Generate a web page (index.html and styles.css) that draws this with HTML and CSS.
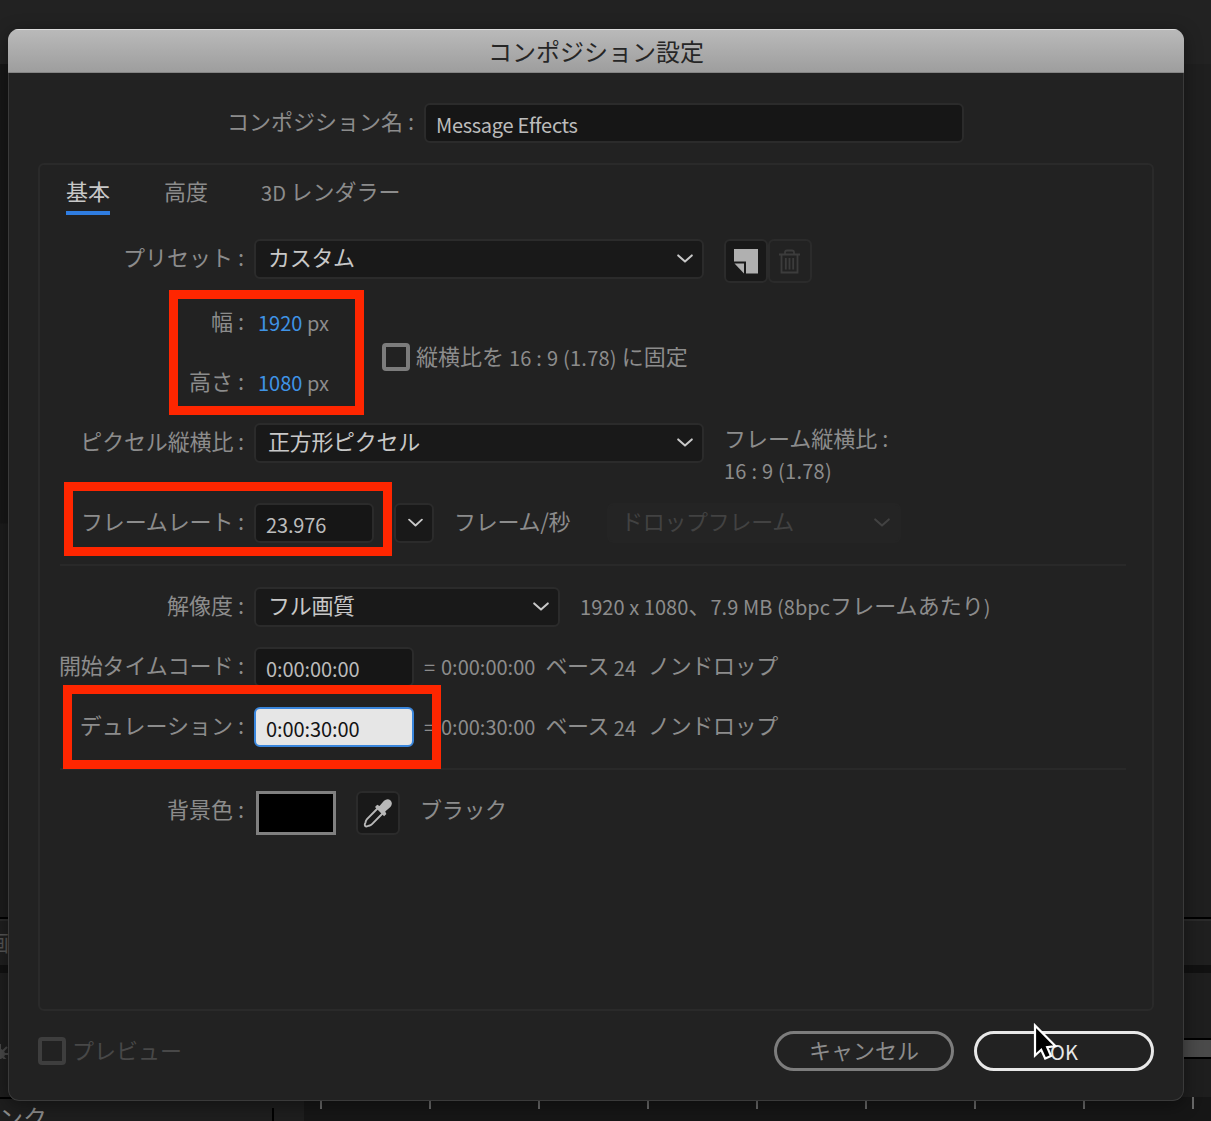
FILE: index.html
```html
<!DOCTYPE html>
<html lang="ja">
<head>
<meta charset="utf-8">
<title>コンポジション設定</title>
<link rel="stylesheet" href="styles.css">
</head>
<body>
<svg class="defs" width="0" height="0" aria-hidden="true">
  <symbol id="chevron" viewBox="0 0 16 10"><path d="M1.2 1.4 8 7.600 14.800 1.400" fill="none" stroke="currentColor" stroke-width="2" stroke-linecap="round" stroke-linejoin="round"/></symbol>
</svg>
<div class="screen">
  <div class="app">
    <div class="app-top"></div>
    <div class="app-view"><div class="app-left"></div><div class="app-right"></div></div>
    <div class="app-bar"><span class="app-bar-text">画</span></div>
    <div class="app-gap"></div>
    <div class="app-tools">
      <svg class="gear" width="20" height="20" viewBox="0 0 20 20"><path d="M10 0v20M0 10h20M3 3l14 14M17 3 3 17" stroke="#484848" stroke-width="2"/><circle cx="10" cy="10" r="5" fill="#484848"/></svg>
      <div class="app-range"></div>
    </div>
    <div class="app-timeline">
      <div class="layers"><span class="layers-text">ンク</span><span class="layers-mark"></span></div>
      <div class="ruler"><i></i><i></i><i></i><i></i><i></i><i></i><i></i><i></i><i></i></div>
    </div>
  </div>

  <div class="dialog">
    <div class="titlebar">コンポジション設定</div>
    <div class="row name-row">
      <div class="label">コンポジション名 :</div>
      <div class="input name-input">Message Effects</div>
    </div>

    <div class="panel">
      <div class="tabs">
        <div class="tab active">基本</div>
        <div class="tab">高度</div>
        <div class="tab render"><span class="lat">3D </span>レンダラー</div>
      </div>

      <div class="row preset">
        <div class="label">プリセット :</div>
        <div class="select wide">カスタム<svg class="chev"><use href="#chevron"/></svg></div>
        <div class="tools">
          <div class="tool"><svg width="25" height="25" viewBox="0 0 25 25"><path d="M0 0h24v24.500H12V12.500H0z" fill="#b0b0b0"/><path d="M.5 14.500H10V24.500z" fill="#b0b0b0"/></svg></div>
          <div class="tool off"><svg width="22" height="25" viewBox="0 0 22 25"><path d="M0 5.500h21M6 5V3.500Q6 1.500 8 1.500h5Q15 1.500 15 3.500V5M2.500 6v17.500h16V6M6.800 9v11.500M10.500 9v11.500M14.200 9v11.500" fill="none" stroke="#3c3c3c" stroke-width="1.800"/></svg></div>
        </div>
      </div>

      <div class="dims">
        <div class="dims-rows">
          <div class="row"><div class="label">幅 :</div><div class="value"><span class="lat"><b>1920</b> px</span></div></div>
          <div class="row"><div class="label">高さ :</div><div class="value"><span class="lat"><b>1080</b> px</span></div></div>
        </div>
        <div class="lock"><span class="check"></span><span class="lock-text">縦横比を <span class="lat ratio">16 : 9 (1.78)</span> に固定</span></div>
      </div>

      <div class="row aspect">
        <div class="label tight">ピクセル縦横比 :</div>
        <div class="select wide">正方形ピクセル<svg class="chev"><use href="#chevron"/></svg></div>
        <div class="frame-aspect">フレーム縦横比 :<br><span class="lat ratio">16 : 9 (1.78)</span></div>
      </div>

      <div class="row">
        <div class="label tight">フレームレート :</div>
        <div class="input rate">23.976</div>
        <div class="select drop"><svg class="chev"><use href="#chevron"/></svg></div>
        <div class="unit">フレーム/秒</div>
        <div class="select disabled">ドロップフレーム<svg class="chev"><use href="#chevron"/></svg></div>
      </div>

      <div class="divider"></div>

      <div class="row">
        <div class="label">解像度 :</div>
        <div class="select res">フル画質<svg class="chev"><use href="#chevron"/></svg></div>
        <div class="res-info"><span class="lat">1920 x 1080</span>、<span class="lat">7.9 MB (8bpc</span>フレームあたり<span class="lat">)</span></div>
      </div>
      <div class="row">
        <div class="label tight">開始タイムコード :</div>
        <div class="input time">0:00:00:00</div>
        <div class="note"><span class="lat equals">=</span><span class="lat">0:00:00:00</span><span class="base">ベース <span class="lat">24</span></span>ノンドロップ</div>
      </div>
      <div class="row">
        <div class="label">デュレーション :</div>
        <div class="input time focus">0:00:30:00</div>
        <div class="note"><span class="lat equals">=</span><span class="lat">0:00:30:00</span><span class="base">ベース <span class="lat">24</span></span>ノンドロップ</div>
      </div>

      <div class="divider"></div>

      <div class="row">
        <div class="label">背景色 :</div>
        <div class="swatch"></div>
        <div class="tool dropper"><svg width="30" height="30" viewBox="0 0 30 30"><path d="M14.500 10.500 4 21.200Q2.800 22.500 2.500 24.500L1.800 26.200Q1.500 28.700 4 28.400L6 27.700Q7.800 27.400 9 26.200L19.500 15.500" fill="none" stroke="#b8b8b8" stroke-width="1.900"/><path d="M12 9 14.200 6.700 16.500 8 21 2.800Q24.500-.3 27.600 2.500 30.200 5.500 27.400 9L22.200 13.600 23.400 16 21.100 18.200z" fill="#b8b8b8"/></svg></div>
        <div class="color-name">ブラック</div>
      </div>
    </div>

    <div class="footer">
      <div class="preview"><span class="check"></span>プレビュー</div>
      <div class="button">キャンセル</div>
      <div class="button primary"><span class="lat">OK</span></div>
    </div>
  </div>

  <div class="mark mark-size"></div>
  <div class="mark mark-rate"></div>
  <div class="mark mark-duration"></div>
  <svg class="cursor" width="26" height="42" viewBox="0 0 26 42"><path d="M2 3.500V33.500L8.200 27.800 12.200 36.500 18 34 14.200 25.200 22.500 24.200z" fill="#000" stroke="#fff" stroke-width="2.200"/></svg>
</div>
</body>
</html>
```
FILE: styles.css
```css
* { box-sizing: border-box; }
body {
  margin: 0;
  background: #181818;
  color: #8c8c8c;
  font: 22px/34px "Noto Sans CJK JP", sans-serif;
  white-space: nowrap;
}
.defs { display: block; }
.lat { font-size: 20px; line-height: 20px; white-space: pre; vertical-align: -1px; }
.ratio { letter-spacing: .25px; }
.screen { position: relative; width: 1211px; height: 1121px; overflow: hidden; }

/* application behind the dialog */
.app { display: flex; flex-direction: column; height: 1121px; }
.app-top { height: 64px; background: #222; }
.app-view { display: flex; height: 853px; }
.app-left { width: 600px; background: linear-gradient(#171717 459px, #1c1c1c 460px); }
.app-right { flex: 1; background: #1f1f1f; }
.app-bar { height: 48px; border-top: 2px solid #000; background: #1f1f1f; box-shadow: inset 0 2px #2a2a2a; }
.app-bar-text { display: block; margin: 5px 0 0 -13px; color: #555; }
.app-gap { height: 8px; background: #111; }
.app-tools { display: flex; align-items: flex-start; justify-content: space-between; height: 86px; padding-top: 65px; background: #1e1e1e; }
.gear { flex: none; margin: 6px 0 0 -10px; }
.app-range { width: 600px; height: 21px; border: solid #000; border-width: 2px 0; background: #4a4a4a; }
.app-timeline { display: flex; flex: 1; padding-top: 38px; background: #1e1e1e; }
.layers { display: flex; justify-content: space-between; width: 304px; height: 24px; padding-right: 30px; border-top: 2px solid #000; color: #8a8a8a; }
.layers-text { margin: 1px 0 0 -1px; font-size: 24px; }
.layers-mark { width: 2px; height: 20px; margin-top: 9px; background: #000; }
.ruler { display: flex; align-items: flex-start; gap: 107px; flex: 1; height: 24px; padding-left: 16px; background: #161616; }
.ruler i { flex: none; width: 2px; height: 12px; background: #686868; }

/* dialog window */
.dialog {
  position: absolute; left: 8px; top: 29px; width: 1176px; height: 1072px;
  display: flex; flex-direction: column;
  border-radius: 11px; background: #222; overflow: hidden;
  box-shadow: 0 4px 18px rgba(0,0,0,.4);
}
.dialog::after { content: ""; position: absolute; inset: 44px 0 0; border: 1px solid #3a3a3a; border-top: 0; border-radius: 0 0 11px 11px; }
.titlebar {
  height: 44px; color: #262626; font-size: 24px; line-height: 43px; text-align: center;
  background: linear-gradient(#bababa, #9d9d9d);
  box-shadow: inset 0 1px #dcdcdc, inset 0 -1px #858585;
}
.row { display: flex; align-items: flex-start; height: 40px; margin-top: 20px; }
.label { width: 204px; margin-right: 10px; text-align: right; }
.tight { letter-spacing: -.15px; }
.name-row { margin-top: 30px; }
.name-row .label { width: 406px; }
.input, .select, .tool { border: 2px solid #2b2b2b; border-radius: 6px; }
.input { height: 40px; padding-left: 10px; background: #161616; color: #bcbcbc; font-size: 20px; line-height: 39px; }
.name-input { width: 540px; letter-spacing: -.3px; }
.select { display: flex; align-items: center; justify-content: space-between; height: 40px; padding: 0 9px 6px 12px; background: #191919; color: #c8c8c8; letter-spacing: -.3px; }
.chev { width: 16px; height: 10px; margin-top: 5px; }
.wide { width: 450px; }

.panel { height: 848px; margin: 20px 30px 0; border: 2px solid #2a2a2a; border-radius: 6px; }
.tabs { display: flex; gap: 54px; height: 50px; padding: 8px 0 0 26px; line-height: 35px; }
.tab { height: 42px; }
.tab.active { border-bottom: 4px solid #2f7de1; color: #c8c8c8; }
.render { margin-left: -1px; }
.preset { height: 44px; margin-top: 24px; }
.tools { display: flex; margin-left: 20px; }
.tool { display: flex; align-items: center; justify-content: center; width: 44px; height: 44px; background: #191919; }
.tool.off { background: none; }

.dims { display: flex; height: 100px; margin-top: 20px; }
.dims-rows { width: 342px; }
.dims .row:first-child { margin-top: 0; }
.value { margin-left: 4px; }
.value b { color: #3f93e6; font-weight: 400; }
.lock { display: flex; gap: 6px; height: 28px; margin-top: 40px; }
.lock-text { margin-top: -5px; }
.check { flex: none; width: 28px; height: 28px; border: 4px solid #7c7c7c; border-radius: 4px; }
.aspect { height: 60px; }
.frame-aspect { margin: -1px 0 0 20px; line-height: 31px; }
.rate { width: 120px; letter-spacing: -.15px; }
.drop { width: 40px; margin-left: 20px; }
.unit { width: 153px; margin-left: 20px; letter-spacing: -.3px; }
.disabled { width: 294px; border-color: #242424; background: #242424; color: #424242; }
.divider { width: 1066px; height: 2px; margin: 21px 0 21px 20px; background: #292929; }
.divider + .row { margin-top: 0; }
.res { width: 306px; }
.res-info { margin-left: 20px; letter-spacing: .06px; }
.time { width: 160px; letter-spacing: -.08px; }
.focus { border-color: #3a86dc; background: #e6e6e6; color: #141414; }
.note { display: flex; align-items: baseline; margin-left: 10px; letter-spacing: -.35px; }
.note .lat { position: relative; top: 1px; letter-spacing: 0; }
.equals { width: 17px; }
.base { margin: 0 12px 0 10px; }
.swatch { width: 80px; height: 44px; margin-left: 2px; border: 3px solid #808080; background: #000; }
.dropper { margin-left: 20px; }
.color-name { margin-left: 20px; letter-spacing: -.3px; }

.footer { display: flex; gap: 20px; margin: 20px 30px 0; }
.preview { display: flex; gap: 6px; flex: 1; color: #484848; line-height: 36px; }
.preview .check { margin-top: 6px; border-color: #3e3e3e; }
.button { width: 180px; height: 40px; border: 3px solid #7d7d7d; border-radius: 20px; line-height: 30px; text-align: center; }
.primary { border-color: #e8e8e8; color: #e8e8e8; }

/* highlights and pointer over the dialog */
.mark { position: absolute; border: 9px solid #ff2600; }
.mark-size { left: 169px; top: 290px; width: 195px; height: 125px; }
.mark-rate { left: 64px; top: 482px; width: 328px; height: 74px; }
.mark-duration { left: 63px; top: 685px; width: 378px; height: 84px; }
.cursor { position: absolute; left: 1033px; top: 1022px; }
```
